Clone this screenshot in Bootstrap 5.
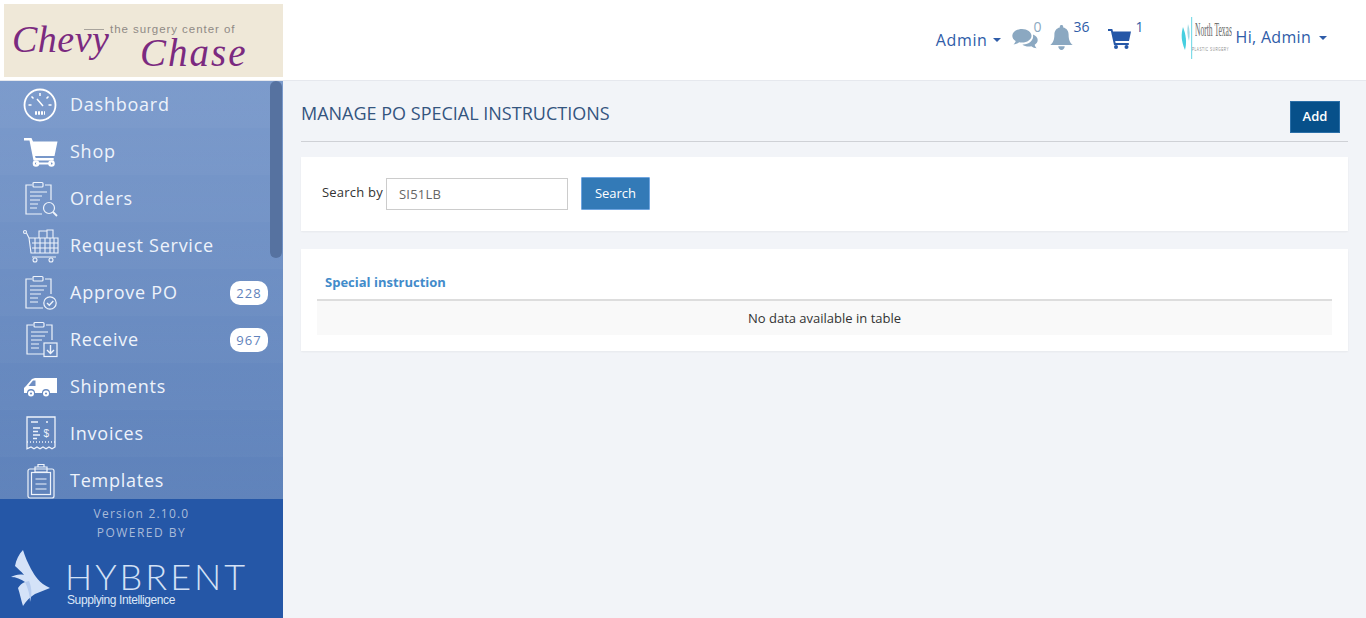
<!DOCTYPE html>
<html>
<head>
    <title>Manage PO Special Instructions</title>
    <link href="https://cdn.jsdelivr.net/npm/bootstrap@5.3.0/dist/css/bootstrap.min.css" rel="stylesheet">
    <style>
        html, body { height: 100%; }
        body { font-family: "Open Sans", sans-serif; background: #f2f4f8; overflow: hidden; }
        .top-head { height: 81px; background: #fff; border-bottom: 1px solid #e6e8ee; }
        .logo-box { width: 279px; height: 73px; margin: 4px 0 0 4px; background: #efe8d8; overflow: hidden; }
        .logo-line { font-family: "Liberation Sans", sans-serif; font-size: 11.500px; line-height: 14px; color: #8f8a86; letter-spacing: .95px; left: 106px; top: 18px; white-space: nowrap; }
        .logo-rule { width: 20px; height: 1px; background: #a8a39c; left: 80px; top: 25px; }
        .logo-script { font-family: "Liberation Serif", serif; font-style: italic; color: #7b2a80; white-space: nowrap; }
        .logo-chevy { font-size: 38px; line-height: 38px; left: 8px; top: 16px; letter-spacing: .5px; }
        .logo-chase { font-size: 39px; line-height: 31px; left: 136px; top: 33px; letter-spacing: 2px; }
        .top-link { color: #2f5ca8; font-size: 16px; line-height: 24px; letter-spacing: .3px; }
        .admin-link { letter-spacing: .65px; }
        .top-caret { width: 0; height: 0; border-left: 4px solid transparent; border-right: 4px solid transparent; border-top: 4px solid #2f5ca8; }
        .admin-caret { margin-left: 5px; }
        .top-count { font-size: 14px; line-height: 14px; }
        .count-grey { color: #8ba8c1; }
        .count-blue { color: #2f5ca8; }
        .top-nav { padding-right: 39px; }
        .admin-group { margin-top: 28px; }
        .top-grp { margin-top: 20px; }
        .grp-chat { margin-left: 11px; }
        .grp-chat svg { margin: 8px -4px 0 0; }
        .grp-bell { margin-left: 8px; }
        .grp-bell svg { margin: 5px 1px 0 0; }
        .grp-cart { margin-left: 18px; }
        .grp-cart svg { margin: 9px 5px 0 0; }
        .grp-user { margin: 17px 0 0 36px; }
        .ntx-logo { width: 52px; height: 42px; }
        .ntx-name { font-family: "Liberation Serif", serif; font-size: 18px; line-height: 18px; color: #6a6a6a; transform: scaleX(.42); transform-origin: left; left: 15px; top: 4px; white-space: nowrap; }
        .ntx-sub { font-family: "Liberation Sans", sans-serif; font-size: 6px; line-height: 7px; color: #8a8a8a; letter-spacing: 1px; left: 12px; top: 29px; white-space: nowrap; transform: scaleX(.52); transform-origin: left; }
        .hi-link { margin-bottom: 2px; }
        .side-wrap { width: 283px; height: 537px; }
        .side-menu { height: 418px; overflow: hidden; background: linear-gradient(#7c9bcc, #5d81ba); }
        .side-item { height: 47px; padding-left: 22px; color: #eef3fb; font-size: 18px; letter-spacing: .75px; background: linear-gradient(rgba(255,255,255,0), rgba(255,255,255,.025)); }
        .side-item svg { width: 37px; height: 38px; flex: none; margin-right: 11px; }
        .side-count { width: 38px; height: 24px; margin-left: auto; margin-right: 15px; background: #fff; color: #5f82bb; border-radius: 10px; font-size: 13px; font-weight: 400; letter-spacing: 1px; padding: 0; line-height: 24px; }
        .side-scroll { width: 12px; height: 177px; right: 1px; top: 0; background: #5672a0; border-radius: 6px; }
        .side-foot { height: 119px; background: #2557a7; }
        .foot-ver { padding-top: 5px; font-size: 12px; line-height: 19px; letter-spacing: 1.2px; color: #a9bbd9; }
        .foot-pow { letter-spacing: 1.500px; }
        .foot-logo { padding: 8px 0 0 11px; }
        .foot-text { margin: 9px 0 0 14px; }
        .foot-name { font-family: Lato, sans-serif; font-weight: 300; font-size: 36px; line-height: 35px; letter-spacing: 3px; color: #d3e1f6; }
        .foot-tag { font-family: "Liberation Sans", sans-serif; font-size: 12px; line-height: 12px; letter-spacing: -.4px; color: #dce7f8; padding-left: 2px; }
        .page-body { padding: 20px 18px 0; min-width: 0; }
        .page-head { height: 41px; border-bottom: 1px solid #cfd1d6; padding-right: 8px; }
        .page-title { font-size: 18px; font-weight: 400; color: #34557f; margin: -1px 0 0; line-height: 26px; }
        .btn-add { width: 50px; height: 32px; padding: 0; font-size: 13px; font-weight: 600; background: #07508a; border: 1px solid #2b6fa8; border-radius: 0; color: #fff; }
        .panel-box { background: #fff; box-shadow: 0 1px 2px rgba(0,0,0,.05); }
        .search-box { height: 74px; margin-top: 15px; padding-left: 21px; }
        .search-label { font-size: 13px; color: #333; margin: 0 3px 2px 0; letter-spacing: .22px; }
        .search-input { width: 182px; height: 32px; border: 1px solid #ccc; border-radius: 0; font-size: 13px; color: #666; padding: 0 12px; letter-spacing: .2px; }
        .btn-search { width: 69px; height: 33px; margin: 0 0 1px 13px; padding: 0; font-size: 13px; background: #337ab7; border: 1px solid #6fa5e0; border-radius: 1px; color: #fff; }
        .table-box { height: 102px; margin-top: 18px; padding: 16px 16px 0; }
        .po-table { margin: 0; font-size: 13px; }
        .po-table th { font-size: 13px; font-weight: 700; color: #428bca; padding: 8px; line-height: 18px; border-bottom: 2px solid #ddd; background: #fff; }
        .po-table td { height: 35px; padding: 1px 0 0; vertical-align: middle; text-align: center; background: #f9f9f9; color: #333; border: 0; }
    </style>
</head>
<body>
    <header class="top-head d-flex justify-content-between">
        <div class="logo-box position-relative">
            <span class="logo-rule position-absolute"></span>
            <span class="logo-line position-absolute">the surgery center of</span>
            <span class="logo-script logo-chevy position-absolute">Chevy</span>
            <span class="logo-script logo-chase position-absolute">Chase</span>
        </div>
        <nav class="top-nav d-flex align-items-start">
            <div class="admin-group d-flex align-items-center">
                <span class="top-link admin-link">Admin</span>
                <span class="top-caret admin-caret"></span>
            </div>
            <div class="top-grp grp-chat d-flex align-items-start">
                <svg width="26" height="21" viewBox="0 0 26 21"><path fill="#8ba8c1" d="M10 1c5.300 0 9.500 3 9.500 6.800s-4.200 6.800-9.500 6.800c-1 0-1.900-.1-2.800-.3C5.600 15.500 3.600 16.300 1.500 16.500c1.100-1 1.900-2.200 2.200-3.500C1.500 11.700 .3 9.900 .3 7.800 .3 4 4.700 1 10 1z"/><path fill="#8ba8c1" d="M21 6.500c2.800 1 4.700 3.100 4.700 5.500 0 1.900-1.200 3.600-3 4.800.2 1.300.9 2.500 2 3.500-2-.2-3.900-.9-5.400-2.100-.8.200-1.700.3-2.600.3-2.500 0-4.800-.8-6.300-2.100 6 .3 11.700-3.500 10.600-9.900z"/></svg>
                <span class="top-count count-grey">0</span>
            </div>
            <div class="top-grp grp-bell d-flex align-items-start">
                <svg width="23" height="26" viewBox="0 0 23 26"><path fill="#8ba8c1" d="M11.500 0c1 0 1.700.7 1.700 1.700v.7c3.400.7 5.400 3.500 5.400 7 0 5.700 1.500 8.300 4.100 10.600H.3c2.600-2.300 4.100-4.900 4.100-10.600 0-3.500 2-6.300 5.400-7v-.7C9.800.7 10.500 0 11.500 0z"/><path fill="#8ba8c1" d="M8.300 21.300h6.400c0 2-1.400 3.700-3.200 3.700s-3.200-1.700-3.200-3.700z"/></svg>
                <span class="top-count count-blue">36</span>
            </div>
            <div class="top-grp grp-cart d-flex align-items-start">
                <svg width="23" height="20" viewBox="0 0 23 20"><path fill="#2557a7" d="M0 0h4.300l.7 2.500h18l-2 9.500H7.200l.4 2h13.200v2H6L2.900 2H0z"/><circle fill="#2557a7" cx="8" cy="18" r="2"/><circle fill="#2557a7" cx="18.500" cy="18" r="2"/></svg>
                <span class="top-count count-blue">1</span>
            </div>
            <div class="grp-user d-flex align-items-center">
                <div class="ntx-logo position-relative">
                    <svg class="position-absolute top-0 start-0" width="14" height="42" viewBox="0 0 14 42"><path fill="#45cfe0" d="M3 10c-2 7-2 14 2 23 2-8 1-15-2-23z"/><path fill="#7fdce8" d="M11 0h1.200v42H11z"/><path fill="#9fd8e4" d="M8 7c-1 6-1 11 1 17 1-6 1-11-1-17z"/></svg>
                    <span class="ntx-name position-absolute">North Texas</span>
                    <span class="ntx-sub position-absolute">PLASTIC SURGERY</span>
                </div>
                <span class="top-link hi-link ms-1">Hi, Admin</span>
                <span class="top-caret ms-2"></span>
            </div>
        </nav>
    </header>

    <div class="d-flex">
        <aside class="side-wrap d-flex flex-column flex-shrink-0">
            <div class="position-relative">
                <div class="side-menu">
                    <div class="side-item d-flex align-items-center">
                        <svg viewBox="0 0 37 38" fill="none" stroke="#fff"><circle cx="18" cy="19" r="15.500" stroke-width="1.800"/><path stroke-width="1.500" d="M18 7v3M9.500 10.500l2 2M26.500 10.500l-2 2M6.500 19h3M26.500 19h3M15 13l6 7"/><path stroke-width="3.500" stroke-dasharray="2 1" d="M13 27h10"/></svg>
                        <span>Dashboard</span>
                    </div>
                    <div class="side-item d-flex align-items-center">
                        <svg viewBox="0 0 37 38"><path fill="#fff" d="M2 5h7.500l1.500 3.500h24.500l-3 14.500H13l.7 2h18v2.500H11.500L7.500 7.500H2z"/><circle fill="none" stroke="#fff" stroke-width="2.200" cx="14" cy="30.500" r="2.200"/><circle fill="none" stroke="#fff" stroke-width="2.200" cx="29.500" cy="30.500" r="2.200"/><path stroke="#fff" stroke-width="2" d="M14 30.500h15"/></svg>
                        <span>Shop</span>
                    </div>
                    <div class="side-item d-flex align-items-center">
                        <svg viewBox="0 0 37 38" fill="none" stroke="#eef3fb" stroke-width="1.200"><path d="M10 5H4v29h16M23 5h6v15"/><rect x="11" y="2.500" width="10" height="4.500" rx="1"/><path d="M8 12h17M8 16h12M8 20h10M8 24h8M8 28h7"/><circle cx="27" cy="28" r="5.500"/><path d="M31 32l4 4" stroke-width="1.800"/></svg>
                        <span>Orders</span>
                    </div>
                    <div class="side-item d-flex align-items-center">
                        <svg viewBox="0 0 37 38" fill="none" stroke="#eef3fb" stroke-width="1.100"><circle cx="3" cy="5" r="1.500"/><path d="M4.500 6L7 11h29v15H9L7 11M10 30h24M10 16h26M10 21h26M13 11v15M18 11v15M23 11v15M28 11v15M32 11v15"/><path d="M17 11V4h8v7M25 11V3h6v8"/><circle cx="13" cy="33" r="2"/><circle cx="29" cy="33" r="2"/></svg>
                        <span>Request Service</span>
                    </div>
                    <div class="side-item d-flex align-items-center">
                        <svg viewBox="0 0 37 38" fill="none" stroke="#eef3fb" stroke-width="1.200"><path d="M10 5H4v29h17M23 5h6v15"/><rect x="11" y="2.500" width="10" height="4.500" rx="1"/><path d="M8 12h17M8 16h14M8 20h11M8 24h8M8 28h8"/><circle cx="28" cy="29" r="6.200"/><path d="M25 29l2.300 2.300 4-4.300" stroke-width="1.400"/></svg>
                        <span>Approve PO</span>
                        <span class="side-count badge">228</span>
                    </div>
                    <div class="side-item d-flex align-items-center">
                        <svg viewBox="0 0 37 38" fill="none" stroke="#eef3fb" stroke-width="1.200"><path d="M11 4H5v29h17M24 4h6v15"/><rect x="12" y="1.500" width="10" height="4.500" rx="1"/><path d="M9 11h17M9 15h14M9 19h11M9 23h8M9 27h8"/><rect x="22" y="22" width="13" height="13.500"/><path d="M28.500 24v8M25 29l3.500 3.500L32 29" stroke-width="1.400"/></svg>
                        <span>Receive</span>
                        <span class="side-count badge">967</span>
                    </div>
                    <div class="side-item d-flex align-items-center">
                        <svg viewBox="0 0 37 38"><path fill="#fff" d="M13 10h22v15h-7a4 4 0 0 0-8 0h-7a4 4 0 0 0-8 0H2v-5l2-2 6-7z"/><path fill="#6f8fc3" d="M11 12.500h2.500V18H6.500z"/><circle fill="#fff" cx="9" cy="25.500" r="3"/><circle fill="#fff" cx="24" cy="25.500" r="3"/><circle fill="#6f8fc3" cx="9" cy="25.500" r="1.100"/><circle fill="#6f8fc3" cx="24" cy="25.500" r="1.100"/></svg>
                        <span>Shipments</span>
                    </div>
                    <div class="side-item d-flex align-items-center">
                        <svg viewBox="0 0 37 38" fill="none" stroke="#eef3fb" stroke-width="1.300"><path d="M5 2h28v30l-3 1.800-3-1.800-3 1.800-3-1.800-3 1.800-3-1.800-3 1.800-3-1.800-4 1.800z"/><path d="M9 7h7M24 7h2M11 13h7M11 16.500h5M11 20h7M11 23.500h4"/><path stroke-dasharray="1 2" d="M5 27h28"/><text x="21.500" y="22" font-size="10" fill="#eef3fb" stroke="none" font-family="Liberation Sans, sans-serif">$</text></svg>
                        <span>Invoices</span>
                    </div>
                    <div class="side-item d-flex align-items-center">
                        <svg viewBox="0 0 37 38" fill="none" stroke="#eef3fb" stroke-width="1.200"><rect x="6" y="7" width="26" height="29" rx="2"/><rect x="9.500" y="10.500" width="19" height="22"/><path d="M13 5h12v5H13zM16 5V2.500h6V5M13.500 17h11M13.500 22h11M13.500 27h11"/></svg>
                        <span>Templates</span>
                    </div>
                </div>
                <div class="side-scroll position-absolute"></div>
            </div>
            <div class="side-foot">
                <div class="foot-ver text-center">Version 2.10.0<div class="foot-pow">POWERED BY</div></div>
                <div class="foot-logo d-flex">
                    <svg width="40" height="58" viewBox="0 0 40 58" class="flex-shrink-0"><path fill="#d4e2f8" d="M12 0C8 4 5 10 4 16c3 3 6 5 9 9-5-1-9 0-13 2 5 0 10 2 14 5-3 1-5 3-7 6 2 6 3 12 5 18 3-5 7-9 12-12 5-2 10-4 15-6C28 33 24 26 20 19 17 13 14 7 12 0z"/><path fill="#b7ccef" d="M14 32c3 6 5 13 5 20 2-7 2-14-1-21z"/></svg>
                    <div class="foot-text">
                        <div class="foot-name">HYBRENT</div>
                        <div class="foot-tag">Supplying Intelligence</div>
                    </div>
                </div>
            </div>
        </aside>

        <main class="page-body flex-grow-1">
            <div class="page-head d-flex justify-content-between align-items-start">
                <h1 class="page-title">MANAGE PO SPECIAL INSTRUCTIONS</h1>
                <button type="button" class="btn btn-add">Add</button>
            </div>
            <div class="panel-box search-box d-flex align-items-center">
                <label class="search-label">Search by</label>
                <input type="text" class="search-input form-control" value="SI51LB">
                <button type="button" class="btn btn-search">Search</button>
            </div>
            <div class="panel-box table-box">
                <table class="table po-table">
                    <thead>
                        <tr><th>Special instruction</th></tr>
                    </thead>
                    <tbody>
                        <tr><td>No data available in table</td></tr>
                    </tbody>
                </table>
            </div>
        </main>
    </div>

    <script src="https://cdn.jsdelivr.net/npm/bootstrap@5.3.0/dist/js/bootstrap.bundle.min.js"></script>
</body>
</html>
